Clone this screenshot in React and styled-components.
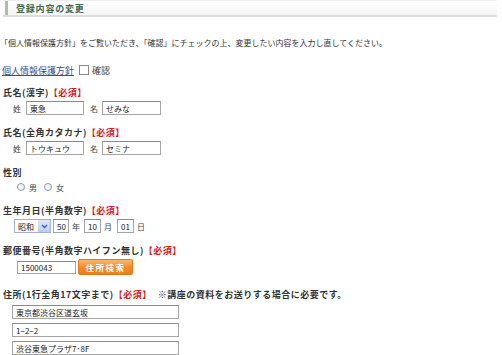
import React from "react";
import styled, { createGlobalStyle } from "styled-components";

const Global = createGlobalStyle`
  html, body { margin: 0; padding: 0; background: #fff; }
  body {
    font-family: "Noto Sans CJK JP", "Liberation Sans", sans-serif;
    font-size: 8px;
    color: #333;
  }
`;

const Page = styled.div`
  width: 502px;
  height: 355px;
  overflow: hidden;
  display: flex;
  flex-direction: column;
`;

const Header = styled.div`
  margin: 0 5px 0 3px;
  height: 15px;
  display: flex;
  align-items: center;
  border-top: 1px solid #eee;
  border-bottom: 2px solid #dcdcdc;
  background: linear-gradient(#ffffff, #f6f6f6);
  position: relative;
  padding-left: 13px;
`;

const Stripe = styled.span`
  position: absolute;
  left: 2px;
  top: 0;
  bottom: 0;
  width: 3px;
  background: #a3c2ab;
`;

const Title = styled.h1`
  margin: 0;
  font-size: 9px;
  font-weight: bold;
  color: #3d6a4c;
  letter-spacing: 0.8px;
`;

const Intro = styled.p`
  margin: 20px 0 0 0;
  line-height: 12px;
  white-space: nowrap;
`;

const LinkRow = styled.div`
  margin: 15px 0 0 2px;
  height: 12px;
  display: flex;
  align-items: center;
  gap: 5px;
  font-size: 9px;
`;

const PolicyLink = styled.a`
  color: #3a4f8f;
  text-decoration: underline;
`;

const CheckLabel = styled.label`
  display: flex;
  align-items: center;
  gap: 3px;
  color: #444;
`;

const CheckBox = styled.span`
  width: 8px;
  height: 8px;
  border: 1px solid #888;
  background: #fff;
`;

const Form = styled.div`
  margin: 11px 0 0 3px;
  display: flex;
  flex-direction: column;
  gap: 12px;
`;

const Field = styled.div`
  display: flex;
  flex-direction: column;
  gap: ${(p) => p.$inner || 2}px;
  margin-top: ${(p) => p.$extra || 0}px;
`;

const Label = styled.div`
  font-size: 9px;
  font-weight: bold;
  letter-spacing: 0.5px;
  line-height: 12px;
  height: 12px;
  white-space: nowrap;
  color: #333;
`;

const Required = styled.span`
  color: #d41a1a;
`;

const Note = styled.span`
  margin-left: 6px;
`;

const Row = styled.div`
  display: flex;
  align-items: center;
  padding-left: ${(p) => p.$indent || 0}px;
  gap: ${(p) => (p.$gap != null ? p.$gap : 4)}px;
  height: ${(p) => p.$h || 14}px;
`;

const Unit = styled.span`
  color: #444;
  margin: ${(p) => p.$m || "0"};
`;

const Input = styled.div`
  box-sizing: border-box;
  width: ${(p) => p.$w}px;
  height: ${(p) => p.$h || 14}px;
  border: 1px solid #a5a5a5;
  border-top-color: #8a8a8a;
  background: #fff;
  padding-left: 3px;
  display: flex;
  align-items: center;
  color: #222;
  white-space: nowrap;
  overflow: hidden;
`;

const Select = styled.div`
  box-sizing: border-box;
  width: 37px;
  height: 14px;
  border: 1px solid #9fb2d0;
  background: #fff;
  display: flex;
  align-items: stretch;
`;

const SelectText = styled.span`
  flex: 1;
  display: flex;
  align-items: center;
  padding-left: 3px;
  color: #222;
`;

const SelectBtn = styled.span`
  width: 12px;
  background: linear-gradient(#dfe8fa, #b9cdf3);
  display: flex;
  align-items: center;
  justify-content: center;
`;

const RadioLabel = styled.label`
  display: flex;
  align-items: center;
  gap: 4px;
  color: #444;
`;

const Radio = styled.span`
  box-sizing: border-box;
  width: 8px;
  height: 8px;
  border-radius: 50%;
  border: 1px solid #8a99a8;
  background: radial-gradient(circle at 40% 40%, #fff, #e4e8ec);
`;

const SearchButton = styled.button`
  box-sizing: border-box;
  width: 55px;
  height: 16px;
  border: 1px solid #e07a18;
  border-radius: 2px;
  background: linear-gradient(#fbb66a, #f28a2a 55%, #ef7e1c);
  color: #fff;
  font-family: inherit;
  font-size: 8.5px;
  font-weight: bold;
  letter-spacing: 1.5px;
  padding: 0;
  display: flex;
  align-items: center;
  justify-content: center;
`;

const AddressInput = styled(Input)`
  margin-left: 9px;
`;

export default function App() {
  return (
    <>
      <Global />
      <Page>
        <Header>
          <Stripe />
          <Title>登録内容の変更</Title>
        </Header>
        <Intro>「個人情報保護方針」をご覧いただき、「確認」にチェックの上、変更したい内容を入力し直してください。</Intro>
        <LinkRow>
          <PolicyLink href="#">個人情報保護方針</PolicyLink>
          <CheckLabel>
            <CheckBox />
            確認
          </CheckLabel>
        </LinkRow>
        <Form>
          <Field>
            <Label>
              氏名(漢字)<Required>【必須】</Required>
            </Label>
            <Row $indent={10} $gap={0}>
              <Unit $m="0 5px 0 0">姓</Unit>
              <Input $w={58}>東急</Input>
              <Unit $m="0 4px 0 6px">名</Unit>
              <Input $w={59}>せみな</Input>
            </Row>
          </Field>
          <Field>
            <Label>
              氏名(全角カタカナ)<Required>【必須】</Required>
            </Label>
            <Row $indent={10} $gap={0}>
              <Unit $m="0 5px 0 0">姓</Unit>
              <Input $w={58}>トウキュウ</Input>
              <Unit $m="0 4px 0 6px">名</Unit>
              <Input $w={59}>セミナ</Input>
            </Row>
          </Field>
          <Field>
            <Label>性別</Label>
            <Row $indent={14} $gap={7} $h={12}>
              <RadioLabel>
                <Radio />男
              </RadioLabel>
              <RadioLabel>
                <Radio />女
              </RadioLabel>
            </Row>
          </Field>
          <Field>
            <Label>
              生年月日(半角数字)<Required>【必須】</Required>
            </Label>
            <Row $indent={11} $gap={0}>
              <Select>
                <SelectText>昭和</SelectText>
                <SelectBtn>
                  <svg width="7" height="5" viewBox="0 0 7 5">
                    <path d="M1 1 L3.5 3.5 L6 1" fill="none" stroke="#3a5fb0" strokeWidth="1.4" />
                  </svg>
                </SelectBtn>
              </Select>
              <Input $w={16} style={{ marginLeft: 2 }}>50</Input>
              <Unit $m="0 4px 0 3px">年</Unit>
              <Input $w={17}>10</Input>
              <Unit $m="0 5px 0 3px">月</Unit>
              <Input $w={17}>01</Input>
              <Unit $m="0 0 0 3px">日</Unit>
            </Row>
          </Field>
          <Field>
            <Label>
              郵便番号(半角数字ハイフン無し)<Required>【必須】</Required>
            </Label>
            <Row $indent={14} $gap={2} $h={16}>
              <Input $w={59} $h={13}>1500043</Input>
              <SearchButton>住所検索</SearchButton>
            </Row>
          </Field>
          <Field $extra={2} $inner={4}>
            <Label>
              住所(1行全角17文字まで)<Required>【必須】</Required>
              <Note>※講座の資料をお送りする場合に必要です。</Note>
            </Label>
            <AddressInput $w={167}>東京都渋谷区道玄坂</AddressInput>
            <AddressInput $w={167}>1−2−2</AddressInput>
            <AddressInput $w={167}>渋谷東急プラザ7･8F</AddressInput>
          </Field>
        </Form>
      </Page>
    </>
  );
}
